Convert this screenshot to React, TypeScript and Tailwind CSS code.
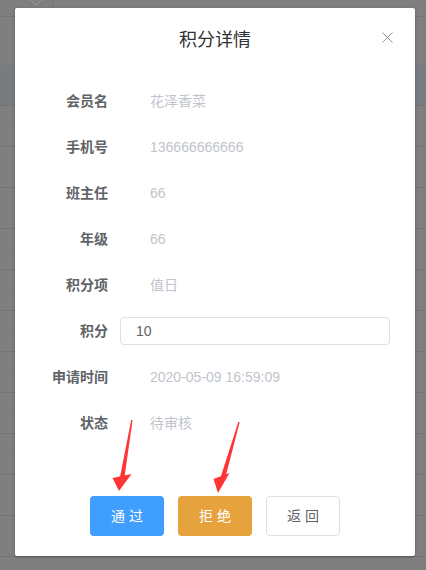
import React from "react";

const font = { fontFamily: '"Liberation Sans", "Noto Sans CJK SC", sans-serif' };

const rows: { label: string; value: string; input?: boolean }[] = [
  { label: "会员名", value: "花泽香菜" },
  { label: "手机号", value: "136666666666" },
  { label: "班主任", value: "66" },
  { label: "年级", value: "66" },
  { label: "积分项", value: "值日" },
  { label: "积分", value: "10", input: true },
  { label: "申请时间", value: "2020-05-09 16:59:09" },
  { label: "状态", value: "待审核" },
];

function Backdrop() {
  return (
    <div className="flex flex-col">
      {/* top filter bar */}
      <div className="h-[17px] border-b border-[#747474] flex">
        <div className="w-[53px] border-r border-[#747474] flex justify-end pr-[10px]">
          <svg width="12" height="8" viewBox="0 0 12 8" className="mt-[-1px]">
            <path d="M1 1 L6 6 L11 1" fill="none" stroke="#9a9a9a" strokeWidth="1" />
          </svg>
        </div>
      </div>
      <div className="h-[48px] flex items-center pl-[14px]">
        <span className="text-[13px] text-[#8a8a8a]">z</span>
      </div>
      <div className="h-[41px] bg-[#787b80] border-b border-[#747474]" />
      {Array.from({ length: 11 }).map((_, i) => (
        <div key={i} className="h-[41px] border-b border-[#747474] flex items-center">
          <span className="ml-[13px] w-[2px] h-[3px] bg-[#8c7a5e]" />
        </div>
      ))}
    </div>
  );
}

function Arrow({ points, head }: { points: string; head: string }) {
  return (
    <>
      <polygon points={points} fill="#ff3434" />
      <polygon points={head} fill="#ff3434" />
    </>
  );
}

export default function App() {
  return (
    <div className="relative w-[426px] h-[570px] overflow-hidden bg-[#7f7f7f]" style={font}>
      <Backdrop />

      {/* dialog */}
      <div className="absolute left-[15px] top-[8px] w-[400px] h-[548px] bg-white rounded-[2px] shadow-[0_1px_3px_rgba(0,0,0,0.3)] flex flex-col">
        <div className="relative pt-[20px] h-[44px] text-center">
          <span className="text-[18px] leading-[24px] text-[#303133]">积分详情</span>
          <svg className="absolute left-[367px] top-[24px]" width="11" height="11" viewBox="0 0 11 11">
            <path d="M0.5 0.5 L10.5 10.5 M10.5 0.5 L0.5 10.5" stroke="#909399" strokeWidth="1" />
          </svg>
        </div>

        <div className="mt-[26px] flex flex-col">
          {rows.map((r) => (
            <div key={r.label} className="h-[46px] flex items-center">
              <div className="w-[93px] text-right text-[14px] font-bold text-[#606266]">{r.label}</div>
              {r.input ? (
                <div className="ml-[12px] w-[270px] h-[28px] border border-[#dcdfe6] rounded-[4px] flex items-center pl-[15px] text-[14px] text-[#606266]">
                  {r.value}
                </div>
              ) : (
                <div className="ml-[42px] text-[14px] text-[#c0c4cc]">{r.value}</div>
              )}
            </div>
          ))}
        </div>

        <div className="mt-[50px] flex gap-[14px] pl-[75px]">
          <button className="w-[74px] h-[40px] rounded-[4px] bg-[#409eff] text-white text-[14px] tracking-[4px] pl-[4px]">
            通过
          </button>
          <button className="w-[74px] h-[40px] rounded-[4px] bg-[#e6a23c] text-white text-[14px] tracking-[4px] pl-[4px]">
            拒绝
          </button>
          <button className="w-[74px] h-[40px] rounded-[4px] bg-white border border-[#dcdfe6] text-[#606266] text-[14px] tracking-[4px] pl-[4px]">
            返回
          </button>
        </div>
      </div>

      {/* annotation arrows */}
      <svg className="absolute left-0 top-0 pointer-events-none" width="426" height="570" viewBox="0 0 426 570">
        <Arrow points="131.2,420 132.6,420 124.5,477 120,477" head="112.5,478 131.5,474 119,491" />
        <Arrow points="238.3,422 239.7,422 225.5,477 221,476" head="213.5,479 229.5,473 218,493" />
      </svg>
    </div>
  );
}
